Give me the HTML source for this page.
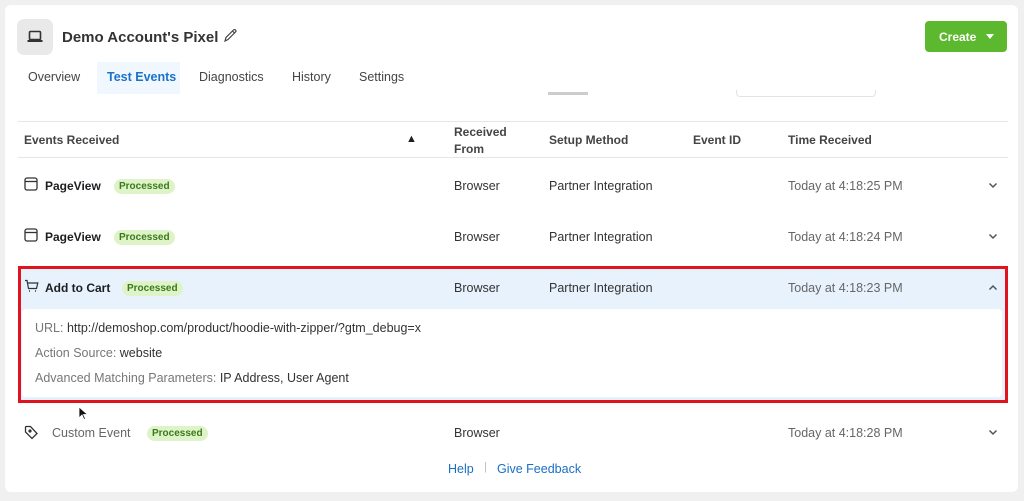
<!DOCTYPE html>
<html><head><meta charset="utf-8"><style>
*{margin:0;padding:0;box-sizing:border-box}
body{width:1024px;height:501px;background:#f0f0f0;font-family:"Liberation Sans",Arial,sans-serif;position:relative;overflow:hidden;color:#1c1e21}
.card{position:absolute;left:5px;top:5px;width:1013px;height:487px;background:#fff;border-radius:6px}
.a{position:absolute;white-space:nowrap}
.tab{font-size:12.5px;color:#444}
.h{font-size:12px;font-weight:bold;color:#444}
.ev{font-size:12px;font-weight:bold;color:#1c1e21}
.pill{font-size:10px;font-weight:bold;color:#3a7a1a;background:#dff3c9;border-radius:9px;padding:2px 5px}
.c{font-size:12.5px;color:#333}
.t{font-size:12.5px;color:#666}
.line{position:absolute;left:18px;width:990px;height:1px;background:#e6e6e6}
.lbl{color:#777}
</style></head><body>
<div class="card"></div>
<div class="a" style="left:17px;top:19px;width:36px;height:36px;background:#e9e9e9;border-radius:7px"></div>
<svg class="a" style="left:27px;top:30px" width="16" height="13" viewBox="0 0 16 13"><rect x="2.5" y="1.5" width="11" height="8" rx="1" fill="none" stroke="#333" stroke-width="1.6"/><rect x="0.5" y="10" width="15" height="2" fill="#333"/></svg>
<div class="a" style="left:62px;top:29px;font-size:15px;font-weight:bold;color:#333">Demo Account's Pixel</div>
<svg class="a" style="left:223px;top:28px" width="15" height="15" viewBox="0 0 15 15"><path d="M2 13l1-3.5L10.5 2a1.4 1.4 0 0 1 2 2L5 11.5z M9.5 3l2 2" fill="none" stroke="#444" stroke-width="1.2"/></svg>
<div class="a" style="left:925px;top:21px;width:82px;height:31px;background:#5cb82e;border-radius:4px"></div>
<div class="a" style="left:939px;top:30px;font-size:12px;font-weight:bold;color:#fff">Create</div>
<div class="a" style="left:986px;top:34px;width:0;height:0;border-left:4px solid transparent;border-right:4px solid transparent;border-top:5px solid #fff"></div>
<div class="a" style="left:97px;top:62px;width:83px;height:32px;background:#f1f7fe"></div>
<div class="a tab" style="left:28px;top:70px">Overview</div>
<div class="a tab" style="left:107px;top:70px;color:#1a73c8;font-weight:bold">Test Events</div>
<div class="a tab" style="left:199px;top:70px">Diagnostics</div>
<div class="a tab" style="left:292px;top:70px">History</div>
<div class="a tab" style="left:359px;top:70px">Settings</div>
<div class="a" style="left:548px;top:92px;width:40px;height:3px;background:#ccc"></div>
<div class="a" style="left:736px;top:90px;width:140px;height:7px;border:1px solid #e3e3e3;border-top:none;border-radius:0 0 4px 4px"></div>
<div class="line" style="top:121px"></div>
<div class="a h" style="left:24px;top:133px">Events Received</div>
<div class="a" style="left:406px;top:133px;font-size:11px">▲</div>
<div class="a h" style="left:454px;top:124px;line-height:17px;white-space:normal">Received<br>From</div>
<div class="a h" style="left:549px;top:133px">Setup Method</div>
<div class="a h" style="left:693px;top:133px">Event ID</div>
<div class="a h" style="left:788px;top:133px">Time Received</div>
<div class="line" style="top:157px"></div>

<svg class="a" style="left:24px;top:177px" width="14" height="14" viewBox="0 0 14 14"><rect x="1" y="1" width="12" height="12" rx="2" fill="none" stroke="#333" stroke-width="1.3"/><path d="M1 4.5h12" stroke="#333" stroke-width="1.3"/></svg>
<div class="a ev" style="left:45px;top:179px">PageView</div>
<div class="a pill" style="left:114px;top:179px">Processed</div>
<div class="a c" style="left:454px;top:179px">Browser</div>
<div class="a c" style="left:549px;top:179px">Partner Integration</div>
<div class="a t" style="left:788px;top:179px">Today at 4:18:25 PM</div>
<svg class="a" style="left:988px;top:182px" width="10" height="7" viewBox="0 0 10 7"><path d="M1.5 1.5l3.5 3.5 3.5-3.5" fill="none" stroke="#555" stroke-width="1.5"/></svg>

<svg class="a" style="left:24px;top:228px" width="14" height="14" viewBox="0 0 14 14"><rect x="1" y="1" width="12" height="12" rx="2" fill="none" stroke="#333" stroke-width="1.3"/><path d="M1 4.5h12" stroke="#333" stroke-width="1.3"/></svg>
<div class="a ev" style="left:45px;top:230px">PageView</div>
<div class="a pill" style="left:114px;top:230px">Processed</div>
<div class="a c" style="left:454px;top:230px">Browser</div>
<div class="a c" style="left:549px;top:230px">Partner Integration</div>
<div class="a t" style="left:788px;top:230px">Today at 4:18:24 PM</div>
<svg class="a" style="left:988px;top:233px" width="10" height="7" viewBox="0 0 10 7"><path d="M1.5 1.5l3.5 3.5 3.5-3.5" fill="none" stroke="#555" stroke-width="1.5"/></svg>

<div class="a" style="left:18px;top:266px;width:990px;height:137px;border:3px solid #e0141e;background:#e7f2fd"></div>
<div class="a" style="left:22px;top:309px;width:980px;height:88px;background:#fff;border-radius:4px"></div>
<svg class="a" style="left:24px;top:279px" width="15" height="14" viewBox="0 0 15 14"><path d="M1 1.5h2l1.5 8h8l1.3-5.5H4" fill="none" stroke="#333" stroke-width="1.2"/><path d="M5 12h1M11 12h1" stroke="#333" stroke-width="1.5"/></svg>
<div class="a ev" style="left:45px;top:281px">Add to Cart</div>
<div class="a pill" style="left:122px;top:281px">Processed</div>
<div class="a c" style="left:454px;top:281px">Browser</div>
<div class="a c" style="left:549px;top:281px">Partner Integration</div>
<div class="a t" style="left:788px;top:281px">Today at 4:18:23 PM</div>
<svg class="a" style="left:988px;top:284px" width="10" height="7" viewBox="0 0 10 7"><path d="M1.5 5.5l3.5-3.5 3.5 3.5" fill="none" stroke="#555" stroke-width="1.5"/></svg>
<div class="a c" style="left:35px;top:321px"><span class="lbl">URL:</span> http://demoshop.com/product/hoodie-with-zipper/?gtm_debug=x</div>
<div class="a c" style="left:35px;top:346px"><span class="lbl">Action Source:</span> website</div>
<div class="a c" style="left:35px;top:371px"><span class="lbl">Advanced Matching Parameters:</span> IP Address, User Agent</div>

<svg class="a" style="left:24px;top:425px" width="15" height="15" viewBox="0 0 15 15"><path d="M1.5 2v5l6.5 6.5 5-5L6.5 1.5H2z" fill="none" stroke="#333" stroke-width="1.3"/><circle cx="6" cy="6" r="1.6" fill="#333"/></svg>
<div class="a" style="left:52px;top:426px;font-size:12.5px;color:#666">Custom Event</div>
<div class="a pill" style="left:147px;top:426px">Processed</div>
<div class="a c" style="left:454px;top:426px">Browser</div>
<div class="a t" style="left:788px;top:426px">Today at 4:18:28 PM</div>
<svg class="a" style="left:988px;top:429px" width="10" height="7" viewBox="0 0 10 7"><path d="M1.5 1.5l3.5 3.5 3.5-3.5" fill="none" stroke="#555" stroke-width="1.5"/></svg>

<div class="a" style="left:448px;top:462px;font-size:12.5px;color:#1a6fc4">Help</div>
<div class="a" style="left:484px;top:461px;font-size:11px;color:#bbb">|</div>
<div class="a" style="left:497px;top:462px;font-size:12.5px;color:#1a6fc4">Give Feedback</div>
<svg class="a" style="left:78px;top:406px" width="10" height="15" viewBox="0 0 10 15"><path d="M1 1v11l3-3 2 4.5 1.5-.7-2-4.3h4z" fill="#111" stroke="#fff" stroke-width="0.8"/></svg>
</body></html>
